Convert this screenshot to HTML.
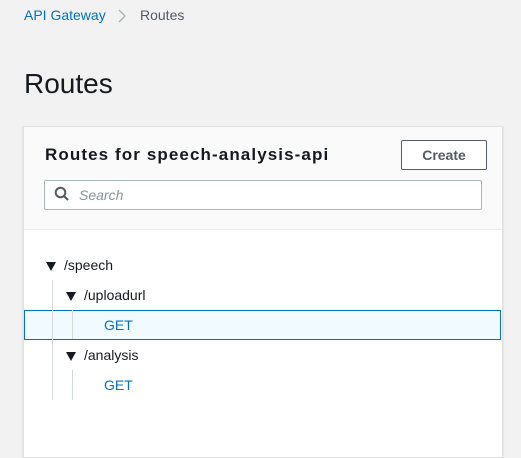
<!DOCTYPE html><html><head><style>
body{margin:0;width:521px;height:450px;background:#f2f2f2;font-family:"Liberation Sans",sans-serif;position:relative;overflow:hidden}
.a{position:absolute}
.t{font-size:14px;color:#16191f;white-space:nowrap}
.tri{width:0;height:0;border-left:5px solid transparent;border-right:5px solid transparent;border-top:9px solid #16191f}
</style></head><body>
<div class="a" style="left:24px;top:7px;font-size:14px;color:#0073bb">API Gateway</div>
<svg class="a" style="left:116px;top:8px" width="12" height="16"><path d="M3 2 L9 8 L3 14" fill="none" stroke="#aab7b8" stroke-width="1.5"/></svg>
<div class="a" style="left:140px;top:7px;font-size:14px;color:#545b64">Routes</div>
<div class="a" style="left:24px;top:68px;font-size:28px;color:#16191f">Routes</div>
<div class="a" style="left:23px;top:126px;width:478px;height:330px;background:#fff;border:1px solid #e1e1e1;box-shadow:0 1px 2px rgba(0,0,0,.15)"></div>
<div class="a" style="left:24px;top:127px;width:477px;height:102px;background:#fafafa;border-bottom:1px solid #eaeded"></div>
<div class="a" style="left:45px;top:145px;font-size:17px;font-weight:bold;color:#16191f;letter-spacing:1.1px;white-space:nowrap">Routes for speech-analysis-api</div>
<div class="a" style="left:401px;top:140px;width:84px;height:28px;border:1px solid #545b64;border-radius:2px;background:#fff;text-align:center;line-height:28px;font-size:14px;font-weight:bold;color:#545b64">Create</div>
<div class="a" style="left:44px;top:180px;width:436px;height:28px;border:1px solid #aab7b8;border-radius:2px;background:#fff"></div>
<svg class="a" style="left:54px;top:186px" width="16" height="16"><circle cx="6.5" cy="6.5" r="4.8" fill="none" stroke="#545b64" stroke-width="2"/><path d="M10 10 L14 14" stroke="#545b64" stroke-width="2.2"/></svg>
<div class="a" style="left:79px;top:187px;font-size:14px;font-style:italic;color:#879596">Search</div>
<div class="a" style="left:24px;top:310px;width:475px;height:28px;background:#f1faff;border:1px solid #0073bb"></div>
<div class="a" style="left:52px;top:280px;width:1px;height:120px;background:#d5dbdb"></div>
<div class="a" style="left:72px;top:310px;width:1px;height:29px;background:#d5dbdb"></div>
<div class="a" style="left:72px;top:370px;width:1px;height:30px;background:#d5dbdb"></div>
<div class="a tri" style="left:46px;top:262px"></div>
<div class="a t" style="left:64px;top:257px">/speech</div>
<div class="a tri" style="left:66px;top:292px"></div>
<div class="a t" style="left:84px;top:287px">/uploadurl</div>
<div class="a t" style="left:104px;top:317px;color:#0073bb">GET</div>
<div class="a tri" style="left:66px;top:352px"></div>
<div class="a t" style="left:84px;top:347px">/analysis</div>
<div class="a t" style="left:104px;top:377px;color:#0073bb">GET</div>
</body></html>
